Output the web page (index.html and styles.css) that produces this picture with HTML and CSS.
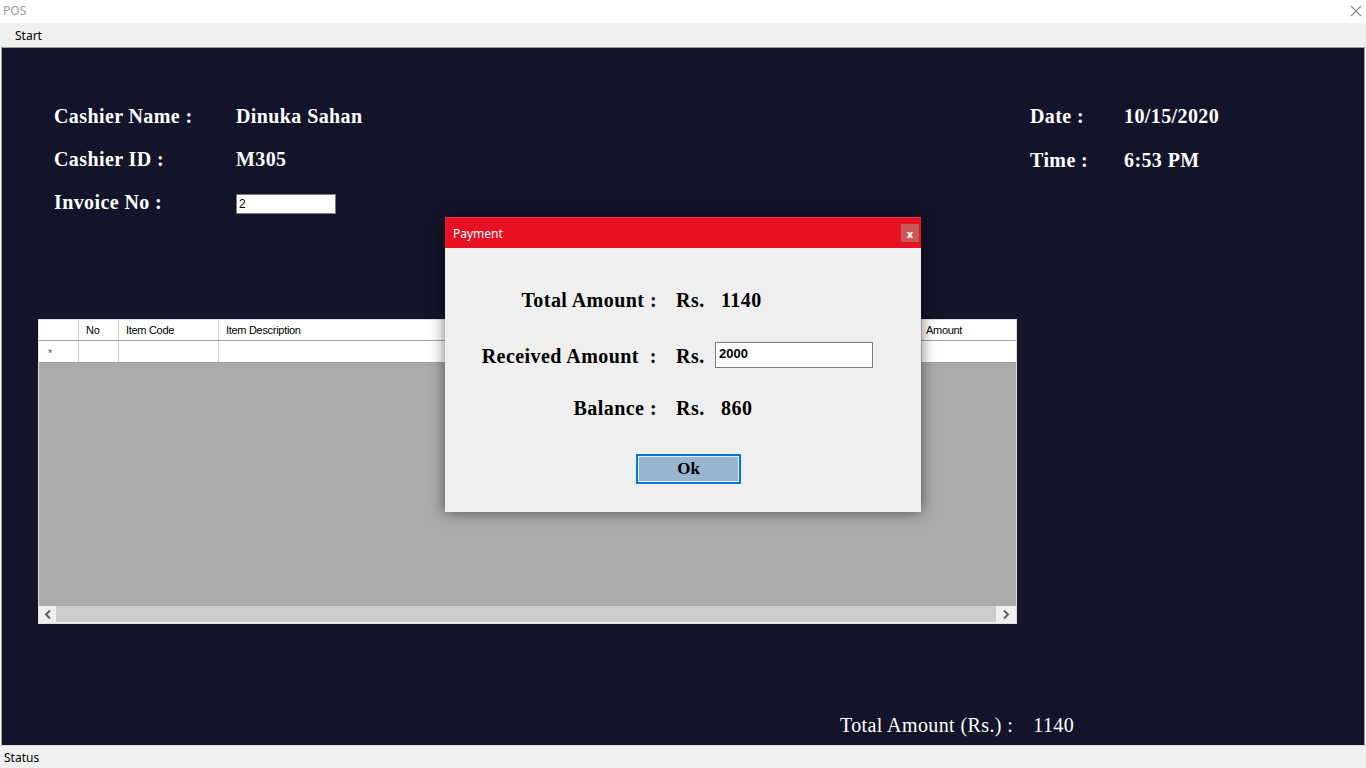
FILE: index.html
```html
<!DOCTYPE html>
<html>
<head>
<meta charset="utf-8">
<title>POS</title>
<link rel="stylesheet" href="styles.css">
</head>
<body>
<div class="window">
  <div class="titlebar">
    <span class="title">POS</span>
    <svg class="close" width="12" height="12" viewBox="0 0 12 12"><path d="M1 1 L11 11 M11 1 L1 11" stroke="#8a8a8a" stroke-width="1.1" fill="none"/></svg>
  </div>
  <div class="menubar"><span class="menu-item">Start</span></div>
  <div class="main">
    <div class="header">
      <div class="info left-info">
        <span class="lbl">Cashier Name :</span><span class="val">Dinuka Sahan</span>
        <span class="lbl">Cashier ID :</span><span class="val">M305</span>
        <span class="lbl">Invoice No :</span><span class="val"><span class="invoice-box">2</span></span>
      </div>
      <div class="info right-info">
        <span class="lbl">Date :</span><span class="val">10/15/2020</span>
        <span class="lbl">Time :</span><span class="val">6:53 PM</span>
      </div>
    </div>
    <div class="grid">
      <div class="grid-row grid-head">
        <div class="c c-rh"></div>
        <div class="c c-no">No</div>
        <div class="c c-code">Item Code</div>
        <div class="c c-desc">Item Description</div>
        <div class="c c-amt">Amount</div>
      </div>
      <div class="grid-row grid-new">
        <div class="c c-rh"><span class="star">*</span></div>
        <div class="c c-no"></div>
        <div class="c c-code"></div>
        <div class="c c-desc"></div>
        <div class="c c-amt"></div>
      </div>
      <div class="grid-empty"></div>
      <div class="hscroll">
        <div class="sb-btn"><svg width="8" height="9" viewBox="0 0 8 9"><path d="M6 0.5 L2 4.5 L6 8.5" stroke="#606060" stroke-width="2" fill="none"/></svg></div>
        <div class="sb-thumb"></div>
        <div class="sb-btn"><svg width="8" height="9" viewBox="0 0 8 9"><path d="M2 0.5 L6 4.5 L2 8.5" stroke="#606060" stroke-width="2" fill="none"/></svg></div>
      </div>
    </div>
    <div class="total-line">
      <span class="total-lbl">Total Amount (Rs.) :</span><span class="total-val">1140</span>
    </div>
  </div>
  <div class="statusbar">Status</div>

  <div class="dialog">
    <div class="dlg-title">
      <span>Payment</span>
      <span class="dlg-close">x</span>
    </div>
    <div class="dlg-body">
      <div class="dlg-row r1"><span class="d-lbl">Total Amount :</span><span class="d-rs">Rs.</span><span class="d-val">1140</span></div>
      <div class="dlg-row r2"><span class="d-lbl">Received Amount&nbsp; :</span><span class="d-rs">Rs.</span><span class="d-input">2000</span></div>
      <div class="dlg-row r3"><span class="d-lbl">Balance :</span><span class="d-rs">Rs.</span><span class="d-val">860</span></div>
      <div class="dlg-btn-row"><span class="ok-btn">Ok</span></div>
    </div>
  </div>
</div>
</body>
</html>
```
FILE: styles.css
```css
html, body {
  margin: 0;
  padding: 0;
}
body {
  width: 1366px;
  height: 768px;
  overflow: hidden;
  font-family: "Noto Sans", "Open Sans", sans-serif;
}
.window {
  position: relative;
  width: 1366px;
  height: 768px;
  display: flex;
  flex-direction: column;
  background: #ffffff;
}
.titlebar {
  height: 23px;
  flex: none;
  display: flex;
  align-items: center;
  justify-content: space-between;
  background: #ffffff;
  padding: 0 4px 0 3px;
}
.title {
  font-size: 12px;
  color: #9b9b9b;
  margin-top: -2px;
}
.close {
  margin-right: 0;
  margin-top: -2px;
}
.menubar {
  height: 24px;
  flex: none;
  background: #f0f0f0;
  display: flex;
  align-items: center;
  padding-left: 15px;
}
.menu-item {
  font-size: 12px;
  color: #000;
}
.main {
  flex: 1;
  margin: 0 1px;
  border: 1px solid #a0a0a0;
  border-bottom: none;
  border-top: 1px solid #9c9c9c;
  background: #13142a;
  display: flex;
  flex-direction: column;
  color: #ffffff;
  font-family: "Liberation Serif", "Times New Roman", serif;
}
.header {
  display: flex;
  justify-content: space-between;
  padding: 57px 0 0 52px;
  height: 170px;
  box-sizing: border-box;
}
.info {
  display: grid;
  align-items: center;
  grid-auto-rows: 22px;
  font-size: 20px;
  font-weight: bold;
  letter-spacing: 0.4px;
}
.left-info {
  grid-template-columns: 182px 150px;
  grid-template-rows: 22px 22px 22px;
  row-gap: 21px;
}
.right-info {
  grid-template-columns: 94px 150px;
  row-gap: 22px;
  margin-right: 90px;
}
.invoice-box {
  display: block;
  width: 100px;
  height: 20px;
  box-sizing: border-box;
  background: #fff;
  border: 1px solid #7a7a7a;
  color: #000;
  font-family: "Liberation Sans", Arial, sans-serif;
  font-weight: normal;
  font-size: 12px;
  line-height: 18px;
  padding-left: 2px;
  margin-top: 3px;
  letter-spacing: 0;
}
.grid {
  margin: 101px 0 0 36px;
  width: 979px;
  height: 305px;
  display: flex;
  flex-direction: column;
  background: #ababab;
  border: 1px solid #e0e0e0;
  box-sizing: border-box;
  font-family: "Liberation Sans", Arial, sans-serif;
  color: #000;
  font-size: 11px;
}
.grid-row {
  display: flex;
  background: #fff;
  flex: none;
}
.grid-head {
  height: 20px;
  border-bottom: 1px solid #a0a0a0;
}
.grid-new {
  height: 21px;
  border-bottom: 1px solid #a0a0a0;
}
.c {
  box-sizing: border-box;
  border-right: 1px solid #cfcfcf;
  display: flex;
  align-items: center;
  padding-left: 7px;
  letter-spacing: -0.3px;
}
.c-rh { width: 40px; }
.c-no { width: 40px; }
.c-code { width: 100px; }
.c-desc { width: 703px; }
.c-amt { flex: 1; border-right: none; padding-left: 4px; }
.star {
  color: #555;
  font-size: 11px;
  margin-left: 2px;
  margin-top: 3px;
}
.grid-empty {
  flex: 1;
}
.hscroll {
  height: 17px;
  flex: none;
  display: flex;
  background: #f0f0f0;
}
.sb-btn {
  width: 17px;
  display: flex;
  align-items: center;
  justify-content: center;
  background: #f0f0f0;
}
.sb-btn:last-child {
  width: 20px;
}
.sb-thumb {
  flex: 1;
  background: #cdcdcd;
  margin: 0 0 1px 0;
}
.total-line {
  margin-top: auto;
  margin-bottom: 8px;
  padding-left: 838px;
  display: flex;
  font-size: 20px;
  line-height: 24px;
  letter-spacing: 0.4px;
}
.total-val {
  margin-left: 20px;
}
.statusbar {
  height: 23px;
  flex: none;
  background: #f0f0f0;
  border-top: 1px solid #dcdcdc;
  box-sizing: border-box;
  font-size: 12px;
  color: #000;
  padding-left: 4px;
  line-height: 23px;
}
.dialog {
  position: absolute;
  left: 445px;
  top: 217px;
  width: 476px;
  height: 295px;
  background: #efefef;
  box-shadow: 0 0 14px rgba(0, 0, 0, 0.55);
  display: flex;
  flex-direction: column;
}
.dlg-title {
  height: 31px;
  flex: none;
  background: #e81123;
  color: #fff;
  font-size: 12px;
  display: flex;
  align-items: center;
  justify-content: space-between;
  padding: 0 2px 0 8px;
  border-top: 1px solid #f03040;
  box-sizing: border-box;
}
.dlg-close {
  width: 18px;
  height: 18px;
  background: #c85a5a;
  display: flex;
  align-items: center;
  justify-content: center;
  font-size: 11px;
  font-weight: bold;
  line-height: 1;
}
.dlg-body {
  flex: 1;
  position: relative;
  font-family: "Liberation Serif", "Times New Roman", serif;
  font-weight: bold;
  font-size: 20px;
  color: #000;
  display: flex;
  flex-direction: column;
  padding-top: 40px;
  letter-spacing: 0.45px;
}
.dlg-row {
  display: flex;
  align-items: center;
  height: 24px;
}
.r2 { margin-top: 32px; }
.r3 { margin-top: 28px; }
.d-lbl {
  width: 212px;
  text-align: right;
  flex: none;
}
.d-rs {
  margin-left: 19px;
  width: 45px;
  flex: none;
}
.d-val {
  margin-left: 0;
}
.d-input {
  width: 158px;
  height: 26px;
  box-sizing: border-box;
  background: #fff;
  border: 1px solid #7a7a7a;
  font-family: "Liberation Sans", Arial, sans-serif;
  font-size: 13px;
  line-height: 22px;
  padding-left: 3px;
  margin-left: -6px;
  margin-top: -2px;
  letter-spacing: 0;
}
.dlg-btn-row {
  margin-top: 34px;
  padding-left: 191px;
}
.ok-btn {
  display: flex;
  align-items: center;
  justify-content: center;
  width: 105px;
  height: 30px;
  box-sizing: border-box;
  background: #99b4d1;
  border: 2px solid #0078d7;
  box-shadow: inset 0 0 0 1px #e8eef6;
  font-size: 17px;
  letter-spacing: 0;
}
```
